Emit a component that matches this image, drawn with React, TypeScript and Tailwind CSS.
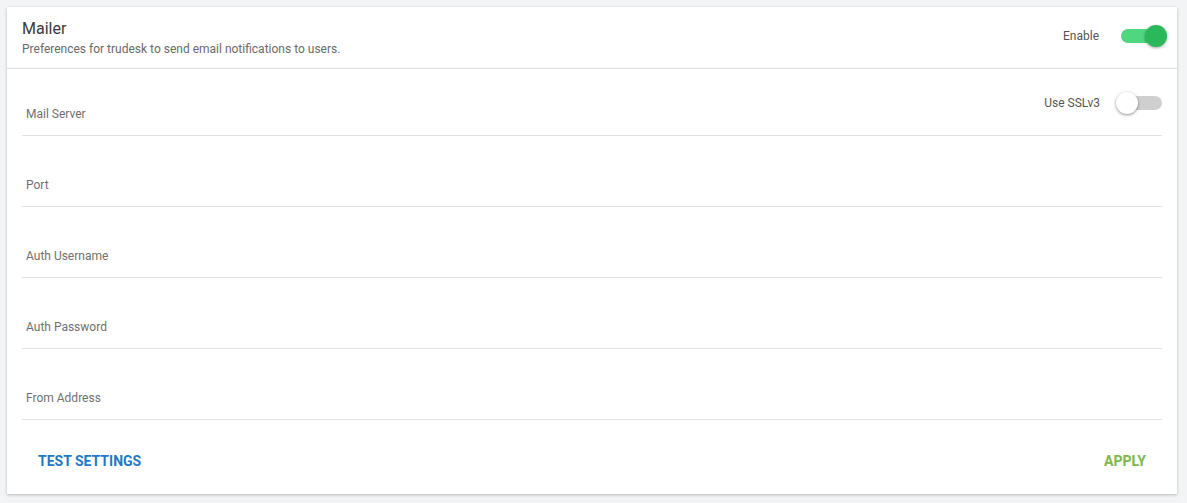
import React from "react";

function Toggle({ on }: { on: boolean }) {
  return on ? (
    <div className="relative w-[46px] h-[22px] flex items-center">
      <div className="w-[42px] h-[14px] rounded-full bg-[#4fd67f]" />
      <div className="absolute right-0 top-0 w-[22px] h-[22px] rounded-full bg-[#29b85a] shadow-[0_1px_3px_rgba(0,0,0,0.35)]" />
    </div>
  ) : (
    <div className="relative w-[46px] h-[22px] flex items-center justify-end">
      <div className="w-[42px] h-[14px] rounded-full bg-[#cfcfcf]" />
      <div className="absolute left-0 top-0 w-[22px] h-[22px] rounded-full bg-white shadow-[0_1px_3px_rgba(0,0,0,0.45)]" />
    </div>
  );
}

function Row({ label, first, children }: { label: string; first?: boolean; children?: React.ReactNode }) {
  return (
    <div
      className={`${first ? "h-[67px]" : "h-[71px]"} border-b border-[#e0e0e0] flex items-end justify-between relative`}
    >
      <span className="pl-[4px] pb-[12px] text-[12px] text-[#707070]">{label}</span>
      {children}
    </div>
  );
}

export default function App() {
  return (
    <div
      className="w-[1187px] h-[503px] bg-[#f3f4f6] pl-[7px] pt-[7px]"
      style={{ fontFamily: "Roboto, 'Liberation Sans', sans-serif" }}
    >
      <div className="w-[1170px] h-[487px] bg-white shadow-[0_1px_3px_rgba(0,0,0,0.25)] flex flex-col">
        <div className="h-[62px] border-b border-[#dcdcdc] flex items-start justify-between pl-[15px] pr-[10px]">
          <div className="pt-[13px]">
            <div className="text-[16px] leading-[18px] text-[#3a3a3a]">Mailer</div>
            <div className="text-[12px] leading-[16px] text-[#6a6a6a] mt-[3px]">
              Preferences for trudesk to send email notifications to users.
            </div>
          </div>
          <div className="flex items-center gap-[22px] pt-[18px]">
            <span className="text-[12px] text-[#555]">Enable</span>
            <Toggle on />
          </div>
        </div>
        <div className="px-[15px] flex flex-col">
          <Row label="Mail Server" first>
            <div className="absolute right-0 top-[23px] flex items-center gap-[16px]">
              <span className="text-[12px] text-[#555]">Use SSLv3</span>
              <Toggle on={false} />
            </div>
          </Row>
          <Row label="Port" />
          <Row label="Auth Username" />
          <Row label="Auth Password" />
          <Row label="From Address" />
        </div>
        <div className="flex-1 flex items-start justify-between pl-[31px] pr-[31px] pt-[31px]">
          <button className="text-[14px] font-bold text-[#1f78c8] uppercase">Test Settings</button>
          <button className="text-[14px] font-bold text-[#7cb84a] uppercase">Apply</button>
        </div>
      </div>
    </div>
  );
}
